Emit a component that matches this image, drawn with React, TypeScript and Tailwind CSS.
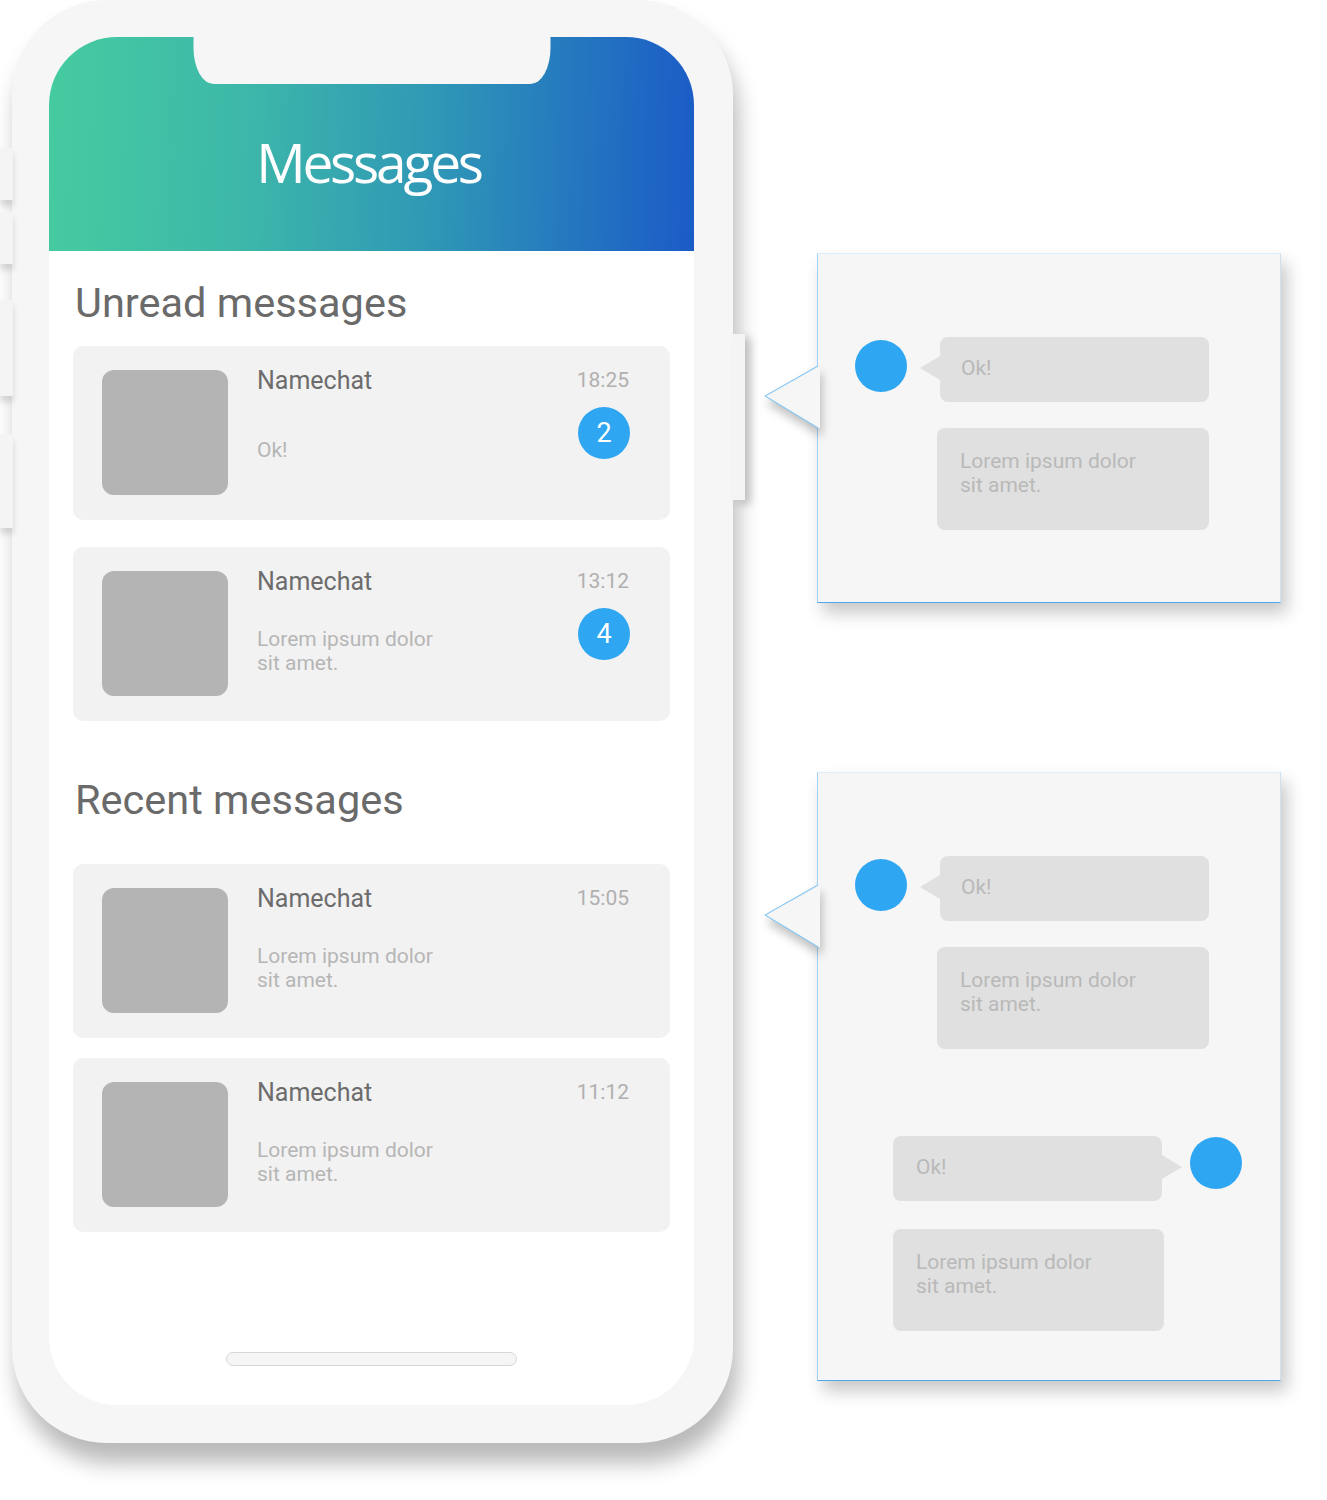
type Chat = { time: string; lines: string[]; badge?: number }

const unread: Chat[] = [
  { time: '18:25', lines: ['Ok!'], badge: 2 },
  { time: '13:12', lines: ['Lorem ipsum dolor', 'sit amet.'], badge: 4 },
]

const recent: Chat[] = [
  { time: '15:05', lines: ['Lorem ipsum dolor', 'sit amet.'] },
  { time: '11:12', lines: ['Lorem ipsum dolor', 'sit amet.'] },
]

function ChatCard({ chat }: { chat: Chat }) {
  return (
    <div className="flex h-[174px] rounded-[10px] bg-[#f2f2f2] pl-[29px] pr-[41px]">
      <div className="mt-[24px] h-[125px] w-[126px] shrink-0 rounded-[12px] bg-[#b4b4b4]" />
      <div className="ml-[29px] flex flex-1 flex-col pt-[20px]">
        <div className="text-[25px] leading-[29px] text-[#6c6c6c]">Namechat</div>
        <div className="flex h-[110px] flex-col justify-center text-[21px] leading-[24px] text-[#b6b6b6]">
          {chat.lines.map((line) => (
            <div key={line}>{line}</div>
          ))}
        </div>
      </div>
      <div className="flex flex-col items-end pt-[22px]">
        <div className="text-[21px] leading-[24px] text-[#b0b0b0]">{chat.time}</div>
        {chat.badge && (
          <div className="mt-[15px] -mr-[1px] flex size-[52px] items-center justify-center rounded-full bg-[#2ea6f2] text-[27px] leading-none text-white">
            {chat.badge}
          </div>
        )}
      </div>
    </div>
  )
}

function Phone() {
  return (
    <div className="relative ml-[12px] h-[1443px] w-[721px] shrink-0">
      <div className="relative h-full w-full rounded-[95px] bg-[#f6f6f6] pb-[38px] pl-[37px] pr-[39px] pt-[37px] shadow-[5px_20px_22px_rgba(0,0,0,0.28)]">
        {/* screen */}
        <div className="relative flex h-full flex-col overflow-hidden rounded-[68px] bg-white">
          <header className="relative h-[214px] shrink-0 bg-[linear-gradient(92deg,#46cba0_0%,#3db8a9_30%,#2f97b6_60%,#1b5bc7_100%)] pt-[93px] text-center">
            <div className="absolute left-1/2 top-0 h-[47px] w-[357px] -translate-x-1/2 rounded-bl-[20px_36px] rounded-br-[20px_36px] bg-[#f6f6f6]" />
            <h1 className="-ml-[6px] font-['Open_Sans',sans-serif] text-[55px] leading-[64px] tracking-[-3.2px] text-white">
              Messages
            </h1>
          </header>

          <div className="flex flex-1 flex-col px-[24px]">
            <h2 className="ml-[2px] mt-[28px] text-[41.5px] leading-[48px] text-[#6a6a6a]">Unread messages</h2>
            <div className="mt-[19px] flex flex-col gap-[27px]">
              {unread.map((c) => (
                <ChatCard key={c.time} chat={c} />
              ))}
            </div>

            <h2 className="ml-[2px] mt-[55px] text-[41.5px] leading-[48px] text-[#6a6a6a]">Recent messages</h2>
            <div className="mt-[40px] flex flex-col gap-[20px]">
              {recent.map((c) => (
                <ChatCard key={c.time} chat={c} />
              ))}
            </div>

            <div className="mb-[39px] mt-auto h-[14px] w-[291px] self-center rounded-full border border-[#d6d6d6] bg-[#f5f5f5]" />
          </div>
        </div>
      </div>

      {/* side buttons */}
      <div className="absolute -left-[12px] top-[148px] h-[52px] w-[13px] bg-[#f4f4f4] shadow-[0_6px_6px_rgba(0,0,0,0.14)]" />
      <div className="absolute -left-[12px] top-[212px] h-[52px] w-[13px] bg-[#f4f4f4] shadow-[0_6px_6px_rgba(0,0,0,0.14)]" />
      <div className="absolute -left-[12px] top-[300px] h-[96px] w-[13px] bg-[#f4f4f4] shadow-[0_6px_6px_rgba(0,0,0,0.14)]" />
      <div className="absolute -left-[12px] top-[434px] h-[94px] w-[13px] bg-[#f4f4f4] shadow-[0_6px_6px_rgba(0,0,0,0.14)]" />
      <div className="absolute -right-[12px] top-[334px] h-[166px] w-[13px] bg-[#f4f4f4] shadow-[6px_4px_8px_rgba(0,0,0,0.2)]" />
    </div>
  )
}

function Pointer() {
  return (
    <svg
      className="absolute -left-[54px] top-[112px] drop-shadow-[2px_7px_5px_rgba(0,0,0,0.24)]"
      width="56"
      height="64"
      viewBox="0 0 56 64"
    >
      <polygon points="1,30 54,0 56,0 56,62 54,62" fill="#f6f6f6" />
      <polyline points="54,0 1,30 54,62" fill="none" stroke="#86c6f2" strokeWidth="1.2" />
    </svg>
  )
}

function Dot({ className = '' }: { className?: string }) {
  return <div className={`size-[52px] shrink-0 rounded-full bg-[#2ea6f2] ${className}`} />
}

function Bubble({
  lines,
  tail,
  className = '',
}: {
  lines: string[]
  tail?: 'left' | 'right'
  className?: string
}) {
  const multi = lines.length > 1
  return (
    <div
      className={`relative flex rounded-[8px] bg-[#e0e0e0] text-[21px] leading-[24px] text-[#b9b9b9] ${
        multi ? 'h-[102px] flex-col pt-[21px]' : 'h-[65px] items-center pb-[4px]'
      } ${className}`}
    >
      {tail === 'left' && (
        <div className="absolute -left-[20px] top-[19px] border-y-[12px] border-r-[20px] border-y-transparent border-r-[#e0e0e0]" />
      )}
      {tail === 'right' && (
        <div className="absolute -right-[20px] top-[19px] border-y-[12px] border-l-[20px] border-y-transparent border-l-[#e0e0e0]" />
      )}
      {lines.map((line) => (
        <div key={line}>{line}</div>
      ))}
    </div>
  )
}

function Panel({ height, reply }: { height: string; reply?: boolean }) {
  return (
    <div
      className={`relative w-[464px] border border-b-[#4ea9ec] border-l-[#9fd0f5] border-r-[#cfe1ef] border-t-[#dcedfb] bg-[#f6f6f6] shadow-[6px_10px_16px_rgba(0,0,0,0.22)] ${height}`}
    >
      <Pointer />
      <div className="flex items-start pl-[37px] pt-[83px]">
        <Dot className="mt-[3px]" />
        <div className="ml-[30px] flex flex-col items-end gap-[26px]">
          <Bubble lines={['Ok!']} tail="left" className="w-[269px] pl-[21px]" />
          <Bubble lines={['Lorem ipsum dolor', 'sit amet.']} className="w-[272px] pl-[23px]" />
        </div>
      </div>
      {reply && (
        <div className="flex items-start pl-[75px] pt-[87px]">
          <div className="flex flex-col items-start gap-[28px]">
            <Bubble lines={['Ok!']} tail="right" className="w-[269px] pl-[23px]" />
            <Bubble lines={['Lorem ipsum dolor', 'sit amet.']} className="w-[271px] pl-[23px]" />
          </div>
          <Dot className="ml-[26px] mt-[1px]" />
        </div>
      )}
    </div>
  )
}

export default function App() {
  return (
    <div className="flex h-[1500px] w-[1327px] overflow-hidden bg-white font-['Roboto',sans-serif]">
      <Phone />
      <div className="ml-[84px] flex flex-col gap-[169px] pt-[253px]">
        <Panel height="h-[350px]" />
        <Panel height="h-[609px]" reply />
      </div>
    </div>
  )
}
